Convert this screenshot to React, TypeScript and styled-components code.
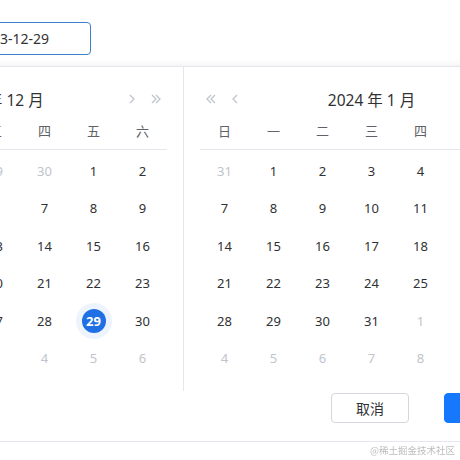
import React from "react";
import styled, { createGlobalStyle } from "styled-components";

const GlobalStyle = createGlobalStyle`
  html, body {
    margin: 0;
    background: #fff;
    overflow: hidden;
  }
  body {
    font-family: "Noto Sans", "Noto Sans CJK SC", sans-serif;
    color: #303133;
  }
`;

const Stage = styled.div`
  width: max-content;
  margin-left: -193px;
  padding-top: 22px;
`;

const DateInput = styled.input`
  display: block;
  box-sizing: border-box;
  margin-left: 158px;
  width: 126px;
  height: 33px;
  padding: 0 10px;
  border: 1px solid #3d82c8;
  border-radius: 4px;
  outline: none;
  font-family: inherit;
  font-size: 14px;
  color: #333;
`;

const Popup = styled.div`
  margin-top: 11px;
  background: #fff;
  border: 1px solid #e4e7ed;
  box-shadow: 0 2px 10px rgba(0, 0, 0, 0.12);
`;

const Panels = styled.div`
  display: flex;
`;

const Panel = styled.div<{ $divider?: boolean }>`
  padding: 17px 16px 14px;
  border-right: ${(p) => (p.$divider ? "1px solid #e4e7ed" : "none")};
`;

const Header = styled.div`
  position: relative;
  height: 30px;
  display: flex;
  align-items: center;
  justify-content: center;
`;

const Title = styled.div`
  font-size: 15.5px;
  color: #303133;
`;

const NavGroup = styled.div<{ $side: "left" | "right" }>`
  position: absolute;
  top: 0;
  bottom: 0;
  ${(p) => (p.$side === "left" ? "left: 4px;" : "right: 4px;")}
  display: flex;
  align-items: center;
  gap: 10px;
`;

const NavButton = styled.span`
  width: 14px;
  height: 14px;
  display: flex;
  align-items: center;
  justify-content: center;
  color: #c0c4cc;
  cursor: pointer;
`;

const Grid = styled.div`
  display: grid;
  grid-template-columns: repeat(7, 49px);
`;

const WeekRow = styled(Grid)`
  box-sizing: border-box;
  height: 36px;
  padding-bottom: 3px;
  align-items: center;
  border-bottom: 1px solid #e4e7ed;
`;

const DayGrid = styled(Grid)`
  padding-top: 2px;
`;

const WeekDay = styled.div`
  text-align: center;
  font-size: 13px;
  color: #606266;
`;

const Cell = styled.div`
  height: 37.5px;
  display: flex;
  align-items: center;
  justify-content: center;
`;

const Day = styled.span<{ $muted?: boolean; $selected?: boolean }>`
  position: relative;
  width: 24px;
  height: 24px;
  border-radius: 50%;
  display: flex;
  align-items: center;
  justify-content: center;
  font-size: 13px;
  font-weight: ${(p) => (p.$selected ? 700 : 400)};
  color: ${(p) => (p.$selected ? "#fff" : p.$muted ? "#c0c4cc" : "#303133")};
  background: ${(p) => (p.$selected ? "#1f6fe5" : "transparent")};
  box-shadow: ${(p) => (p.$selected ? "0 0 0 6px #edf4fe" : "none")};
`;

const Footer = styled.div`
  display: flex;
  justify-content: flex-end;
  gap: 35px;
  padding: 2px 37px 18px 0;
`;

const Button = styled.button<{ $primary?: boolean }>`
  width: 78px;
  height: 30px;
  border-radius: 4px;
  font-family: inherit;
  font-size: 14px;
  cursor: pointer;
  border: 1px solid ${(p) => (p.$primary ? "#1677ff" : "#d3d6db")};
  background: ${(p) => (p.$primary ? "#1677ff" : "#fff")};
  color: ${(p) => (p.$primary ? "#fff" : "#303133")};
`;

const Watermark = styled.div`
  position: fixed;
  right: 5px;
  bottom: 3px;
  font-size: 9.5px;
  color: #bcbcbc;
  font-family: "Noto Sans CJK SC", sans-serif;
`;

const weekDays = ["日", "一", "二", "三", "四", "五", "六"];

type DayCell = { n: number; muted: boolean; selected?: boolean };

function buildMonth(year: number, month: number, selected?: number): DayCell[] {
  const first = new Date(year, month, 1).getDay();
  const days = new Date(year, month + 1, 0).getDate();
  const prevDays = new Date(year, month, 0).getDate();
  const cells: DayCell[] = [];
  for (let i = first - 1; i >= 0; i--) cells.push({ n: prevDays - i, muted: true });
  for (let d = 1; d <= days; d++) cells.push({ n: d, muted: false, selected: d === selected });
  let next = 1;
  while (cells.length < 42) cells.push({ n: next++, muted: true });
  return cells;
}

const Chevron = ({ dir, double }: { dir: "left" | "right"; double?: boolean }) => {
  const flip = dir === "left" ? "scale(-1,1) translate(-14,0)" : undefined;
  return (
    <svg width="14" height="14" viewBox="0 0 14 14" fill="none" stroke="currentColor" strokeWidth="1.3">
      <g transform={flip}>
        {double ? (
          <>
            <path d="M3 3l4 4-4 4" />
            <path d="M7 3l4 4-4 4" />
          </>
        ) : (
          <path d="M5 3l4 4-4 4" />
        )}
      </g>
    </svg>
  );
};

function Calendar({
  year,
  month,
  selected,
  nav,
  divider,
}: {
  year: number;
  month: number;
  selected?: number;
  nav: "left" | "right";
  divider?: boolean;
}) {
  const cells = buildMonth(year, month, selected);
  return (
    <Panel $divider={divider}>
      <Header>
        {nav === "left" ? (
          <NavGroup $side="left">
            <NavButton>
              <Chevron dir="left" double />
            </NavButton>
            <NavButton>
              <Chevron dir="left" />
            </NavButton>
          </NavGroup>
        ) : (
          <NavGroup $side="right">
            <NavButton>
              <Chevron dir="right" />
            </NavButton>
            <NavButton>
              <Chevron dir="right" double />
            </NavButton>
          </NavGroup>
        )}
        <Title>
          {year} 年 {month + 1} 月
        </Title>
      </Header>
      <WeekRow>
        {weekDays.map((w) => (
          <WeekDay key={w}>{w}</WeekDay>
        ))}
      </WeekRow>
      <DayGrid>
        {cells.map((c, i) => (
          <Cell key={i}>
            <Day $muted={c.muted} $selected={c.selected}>
              {c.n}
            </Day>
          </Cell>
        ))}
      </DayGrid>
    </Panel>
  );
}

export default function App() {
  return (
    <>
      <GlobalStyle />
      <Stage>
        <DateInput defaultValue="2023-12-29" readOnly />
        <Popup>
          <Panels>
            <Calendar year={2023} month={11} selected={29} nav="right" divider />
            <Calendar year={2024} month={0} nav="left" />
          </Panels>
          <Footer>
            <Button>取消</Button>
            <Button $primary>确定</Button>
          </Footer>
        </Popup>
      </Stage>
      <Watermark>@稀土掘金技术社区</Watermark>
    </>
  );
}
